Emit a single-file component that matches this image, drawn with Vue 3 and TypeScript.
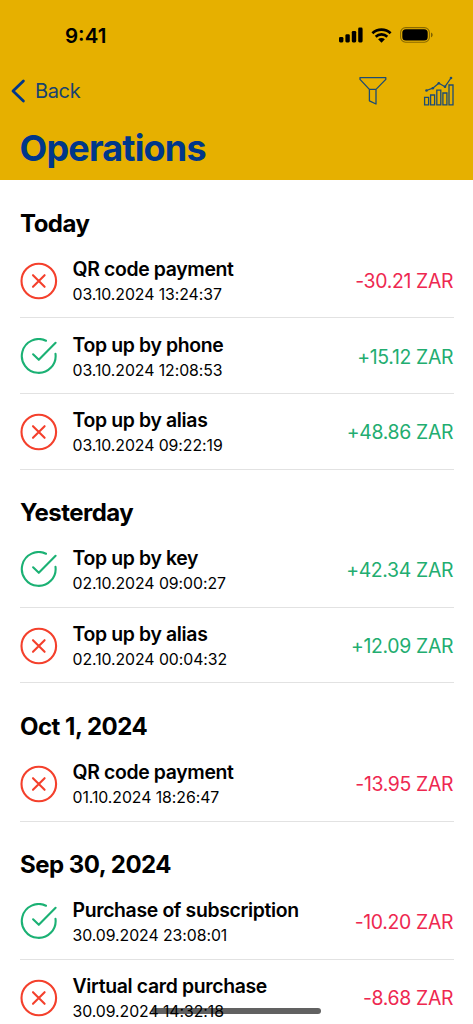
<script setup lang="ts">
interface Operation {
  title: string
  date: string
  amount: string
  ok: boolean
}

interface Group {
  label: string
  items: Operation[]
}

const groups: Group[] = [
  {
    label: 'Today',
    items: [
      { title: 'QR code payment', date: '03.10.2024 13:24:37', amount: '-30.21 ZAR', ok: false },
      { title: 'Top up by phone', date: '03.10.2024 12:08:53', amount: '+15.12 ZAR', ok: true },
      { title: 'Top up by alias', date: '03.10.2024 09:22:19', amount: '+48.86 ZAR', ok: false },
    ],
  },
  {
    label: 'Yesterday',
    items: [
      { title: 'Top up by key', date: '02.10.2024 09:00:27', amount: '+42.34 ZAR', ok: true },
      { title: 'Top up by alias', date: '02.10.2024 00:04:32', amount: '+12.09 ZAR', ok: false },
    ],
  },
  {
    label: 'Oct 1, 2024',
    items: [{ title: 'QR code payment', date: '01.10.2024 18:26:47', amount: '-13.95 ZAR', ok: false }],
  },
  {
    label: 'Sep 30, 2024',
    items: [
      { title: 'Purchase of subscription', date: '30.09.2024 23:08:01', amount: '-10.20 ZAR', ok: true },
      { title: 'Virtual card purchase', date: '30.09.2024 14:32:18', amount: '-8.68 ZAR', ok: false },
    ],
  },
]
</script>

<template>
  <div class="screen">
    <header class="header">
      <div class="status">
        <span class="time">9:41</span>
        <div class="indicators">
          <svg class="signal" width="24" height="16" viewBox="0 0 24 16">
            <rect x="0" y="10" width="4.4" height="5.4" rx="1.3" />
            <rect x="6.4" y="7.2" width="4.4" height="8.2" rx="1.3" />
            <rect x="12.8" y="4" width="4.4" height="11.4" rx="1.3" />
            <rect x="19.2" y="0.6" width="4.4" height="14.8" rx="1.3" />
          </svg>
          <svg class="wifi" width="21" height="15" viewBox="0 0 21 15">
            <path d="M1.4 5.3C6.5 .4 14.5 .4 19.6 5.3M4.7 8.7C8 5.7 13 5.7 16.3 8.7" fill="none" stroke="#000" stroke-width="2.7" />
            <path d="M7.1 11.2C9 9.6 12 9.6 13.9 11.2L10.5 14.7Z" />
          </svg>
          <svg class="battery" width="33" height="16" viewBox="0 0 33 16">
            <rect x="0.6" y="0.6" width="28.8" height="14.6" rx="5" fill="none" stroke="#000" stroke-opacity=".4" stroke-width="1.1" />
            <rect x="2.3" y="2.2" width="25.4" height="11.4" rx="3.6" />
            <path d="M31 5.6C33.2 6.4 33.2 9.4 31 10.2Z" opacity=".45" />
          </svg>
        </div>
      </div>
      <div class="nav">
        <button class="back" type="button">
          <svg width="15" height="24" viewBox="0 0 15 24" fill="none" stroke="#00378a" stroke-width="2.8" stroke-linecap="round" stroke-linejoin="round">
            <path d="M12.4 2L2 12L12.4 22" />
          </svg>
          <span>Back</span>
        </button>
        <div class="actions">
          <svg width="28" height="30" viewBox="0 0 28 30" fill="none" stroke="#1c4b74" stroke-width="1.3" stroke-linejoin="round">
            <path d="M1 1.6H26.8V3.4L17 13.4V28L10.4 24.8V13.4L1 3.4ZM10.4 13.4H17" />
          </svg>
          <svg width="32" height="30" viewBox="0 0 32 30" fill="none" stroke="#1c4b74" stroke-width="1.3">
            <path d="M1.6 21.3H5.6V28.9H1.6ZM7.6 19H11.6V28.9H7.6ZM13.8 14.2H17.8V28.9H13.8ZM19.9 17H23.9V28.9H19.9ZM26 9H30V28.9H26Z" />
            <path d="M3.5 14.5L9.8 12.2L15.8 7.2L22 10.7L28 2" />
            <g fill="#1c4b74" stroke="none">
              <circle cx="3.5" cy="14.5" r="1.3" />
              <circle cx="9.8" cy="12.2" r="1.3" />
              <circle cx="15.8" cy="7.3" r="1.3" />
              <circle cx="22" cy="10.7" r="1.3" />
              <circle cx="28" cy="2" r="1.3" />
            </g>
          </svg>
        </div>
      </div>
      <h1 class="title">Operations</h1>
    </header>

    <main>
      <section v-for="group in groups" :key="group.label">
        <h2 class="label">{{ group.label }}</h2>
        <div v-for="item in group.items" :key="item.date" class="row">
          <svg v-if="item.ok" class="icon" viewBox="0 0 38 38" stroke="#1bb174">
            <path d="M26 2.7A16.9 16.9 0 1 0 35.5 15.9" />
            <path d="M13.1 16.3L18.8 21.8L35.6 4.8" />
          </svg>
          <svg v-else class="icon" viewBox="0 0 38 38" stroke="#f4402c">
            <circle cx="18.8" cy="19" r="17.3" />
            <path d="M13 13.2L24.6 24.8M24.6 13.2L13 24.8" />
          </svg>
          <div class="info">
            <div class="name">{{ item.title }}</div>
            <div class="date">{{ item.date }}</div>
          </div>
          <div class="amount" :class="{ debit: item.amount.startsWith('-') }">{{ item.amount }}</div>
        </div>
      </section>
    </main>
    <div class="home-bar"></div>
  </div>
</template>

<style>
html,
body {
  margin: 0;
  overflow: hidden;
}
</style>

<style scoped>
.screen {
  position: relative;
  width: 473px;
  height: 1024px;
  overflow: hidden;
  background: #fff;
  color: #000;
  font-family: Inter, "Liberation Sans", sans-serif;
}
.header {
  box-sizing: border-box;
  height: 180px;
  background: #e6b000;
  color: #00378a;
}
.status {
  display: flex;
  justify-content: space-between;
  align-items: center;
  height: 70px;
  padding: 0 40px 0 65px;
  color: #000;
}
.time {
  padding-top: 2px;
  font-size: 20.5px;
  font-weight: 600;
  line-height: 24px;
}
.indicators {
  display: flex;
  align-items: center;
  gap: 8px;
}
.nav {
  display: flex;
  justify-content: space-between;
  align-items: center;
  height: 42px;
  padding: 0 18px 0 11px;
}
.back {
  display: flex;
  align-items: center;
  gap: 9px;
  padding: 0;
  border: 0;
  background: none;
  color: #17426f;
  font: 400 20px/24px Inter, sans-serif;
  letter-spacing: -0.35px;
}
.actions {
  display: flex;
  gap: 36px;
}
.title {
  margin: 14px 0 0 19.5px;
  font-size: 36px;
  font-weight: 700;
  letter-spacing: -0.83px;
  line-height: 44px;
}
.label {
  box-sizing: border-box;
  height: 62.5px;
  margin: 0;
  padding: 28.5px 20px 0;
  font-size: 24px;
  font-weight: 700;
  letter-spacing: -0.5px;
  line-height: 30px;
}
.row {
  box-sizing: border-box;
  display: flex;
  align-items: center;
  height: 75.7px;
  margin: 0 19.5px;
  border-bottom: 1.5px solid #e2e2e2;
}
.icon {
  width: 38px;
  height: 38px;
  margin: 2px 15px 0 0;
  flex: none;
  fill: none;
  stroke-width: 2.1;
  stroke-linecap: round;
  stroke-linejoin: round;
}
.info {
  flex: 1;
  padding-top: 3px;
}
.name {
  font-size: 19.4px;
  font-weight: 600;
  letter-spacing: -0.34px;
  line-height: 26px;
}
.date {
  font-size: 15.8px;
  letter-spacing: -0.05px;
  line-height: 25px;
}
.amount {
  padding-top: 2px;
  margin-right: 0.3px;
  color: #22ad70;
  font-size: 19.4px;
  letter-spacing: -0.32px;
  line-height: 26px;
}
.debit {
  color: #ee2850;
}
.home-bar {
  position: absolute;
  left: 152px;
  bottom: 10px;
  width: 169px;
  height: 6px;
  border-radius: 3px;
  background: rgba(0, 0, 0, 0.62);
}
</style>
